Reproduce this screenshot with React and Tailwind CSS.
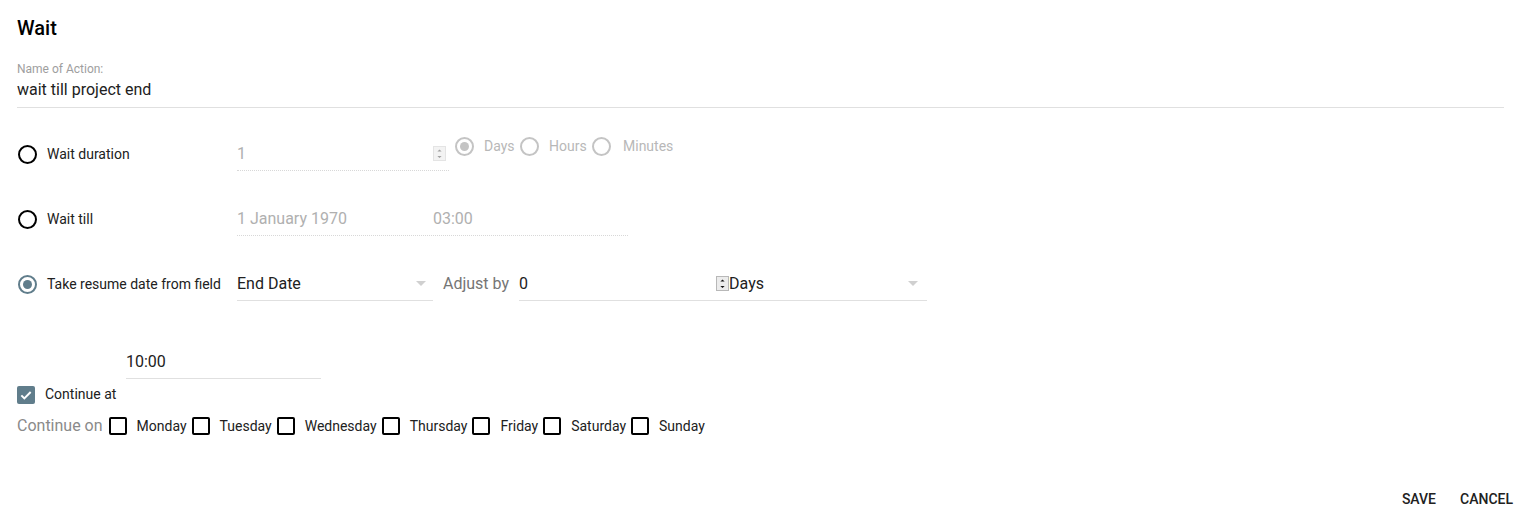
import React from 'react';

const font = { fontFamily: 'Roboto, "Liberation Sans", sans-serif' };

function Radio({ checked, disabled }) {
  const ring = disabled ? 'border-[#c4c4c4]' : checked ? 'border-[#607d8b]' : 'border-black';
  const dot = disabled ? 'bg-[#c4c4c4]' : 'bg-[#607d8b]';
  return (
    <span className={`w-[19px] h-[19px] rounded-full border-2 ${ring} flex items-center justify-center shrink-0`}>
      {checked && <span className={`w-[9px] h-[9px] rounded-full ${dot}`}></span>}
    </span>
  );
}

function Checkbox({ checked }) {
  if (checked) {
    return (
      <span className="w-[18px] h-[18px] rounded-[2px] bg-[#607d8b] flex items-center justify-center shrink-0">
        <svg viewBox="0 0 24 24" className="w-[16px] h-[16px]" fill="none" stroke="white" strokeWidth="3">
          <path d="M5 12.5l4.5 4.5L19 7.5" />
        </svg>
      </span>
    );
  }
  return <span className="w-[18px] h-[18px] rounded-[2px] border-2 border-black shrink-0"></span>;
}

function Spinner({ disabled }) {
  const c = disabled ? '#a0a0a0' : '#111';
  return (
    <span className={`w-[13px] h-[15px] flex flex-col border ${disabled ? 'border-[#e4e4e4] bg-[#f3f3f3]' : 'border-[#b8b8b8] bg-[#ececec]'}`}>
      <svg viewBox="0 0 13 7" className="w-full h-[7px]"><path d="M4 5h5L6.5 2.5z" fill={c} /></svg>
      <svg viewBox="0 0 13 7" className="w-full h-[7px]"><path d="M4 2h5L6.5 4.5z" fill={c} /></svg>
    </span>
  );
}

function Caret() {
  return (
    <svg viewBox="0 0 10 5" className="w-[10px] h-[5px]"><path d="M0 0h10L5 5z" fill="#d0d0d0" /></svg>
  );
}

const days = ['Monday', 'Tuesday', 'Wednesday', 'Thursday', 'Friday', 'Saturday', 'Sunday'];

export default function App() {
  return (
    <div className="w-[1526px] h-[518px] bg-white text-[#212121] px-[17px] pt-[15px] relative" style={font}>
      <h1 className="text-[20px] font-medium leading-[26px] text-black">Wait</h1>

      {/* name */}
      <div className="mt-[21px] w-[1487px] border-b border-[#e0e0e0] pb-[7px]">
        <div className="text-[12px] leading-[14px] text-[#9e9e9e]">Name of Action:</div>
        <div className="text-[16px] leading-[20px] mt-[4px]">wait till project end</div>
      </div>

      {/* wait duration */}
      <div className="flex items-start mt-[28px] h-[36px]">
        <div className="w-[220px] flex items-center gap-[10px] pt-[8px] pl-[1px]">
          <Radio />
          <span className="text-[14px]">Wait duration</span>
        </div>
        <div className="w-[212px] h-[35px] border-b border-dotted border-[#d8d8d8] flex items-center justify-between pt-[1px]">
          <span className="text-[16px] text-[#b0b0b0]">1</span>
          <span className="mr-[3px]"><Spinner disabled /></span>
        </div>
        <div className="flex items-center ml-[6px] text-[14px] text-[#b8b8b8]">
          <Radio checked disabled />
          <span className="ml-[10px] w-[36px]">Days</span>
          <Radio disabled />
          <span className="ml-[10px] w-[43px]">Hours</span>
          <Radio disabled />
          <span className="ml-[12px]">Minutes</span>
        </div>
      </div>

      {/* wait till */}
      <div className="flex items-start mt-[29px] h-[36px]">
        <div className="w-[220px] flex items-center gap-[10px] pt-[8px] pl-[1px]">
          <Radio />
          <span className="text-[14px]">Wait till</span>
        </div>
        <div className="w-[391px] h-[35px] border-b border-dotted border-[#d8d8d8] flex items-center pt-[1px] text-[16px] text-[#b0b0b0]">
          <span className="w-[196px]">1 January 1970</span>
          <span>03:00</span>
        </div>
      </div>

      {/* from field */}
      <div className="flex items-start mt-[29px] h-[36px]">
        <div className="w-[220px] flex items-center gap-[10px] pt-[8px] pl-[1px]">
          <Radio checked />
          <span className="text-[14px]">Take resume date from field</span>
        </div>
        <div className="w-[196px] h-[35px] border-b border-[#e0e0e0] flex items-center justify-between pt-[1px] pr-[7px]">
          <span className="text-[16px]">End Date</span>
          <Caret />
        </div>
        <span className="ml-[10px] mr-[10px] text-[16px] text-[#757575] h-[35px] flex items-center pt-[1px]">Adjust by</span>
        <div className="w-[408px] h-[35px] border-b border-[#e0e0e0] flex items-center pt-[1px]">
          <span className="text-[16px] w-[197px]">0</span>
          <Spinner />
          <span className="text-[16px] flex-1">Days</span>
          <span className="mr-[9px]"><Caret /></span>
        </div>
      </div>

      {/* continue at */}
      <div className="ml-[109px] mt-[42px] w-[195px] h-[35px] border-b border-[#e0e0e0] flex items-center pt-[1px]">
        <span className="text-[16px]">10:00</span>
      </div>
      <div className="flex items-center gap-[10px] mt-[5px]">
        <Checkbox checked />
        <span className="text-[14px]">Continue at</span>
      </div>

      {/* continue on */}
      <div className="flex items-center mt-[9px]">
        <span className="text-[16px] text-[#8a8a8a] mr-[6px]">Continue on</span>
        {days.map((d) => (
          <div key={d} className="flex items-center gap-[10px] mr-[5px]">
            <Checkbox />
            <span className="text-[14px]">{d}</span>
          </div>
        ))}
      </div>

      {/* actions */}
      <div className="absolute right-[13px] bottom-[8px] flex gap-[24px] text-[14px] font-medium">
        <button className="uppercase">Save</button>
        <button className="uppercase">Cancel</button>
      </div>
    </div>
  );
}
